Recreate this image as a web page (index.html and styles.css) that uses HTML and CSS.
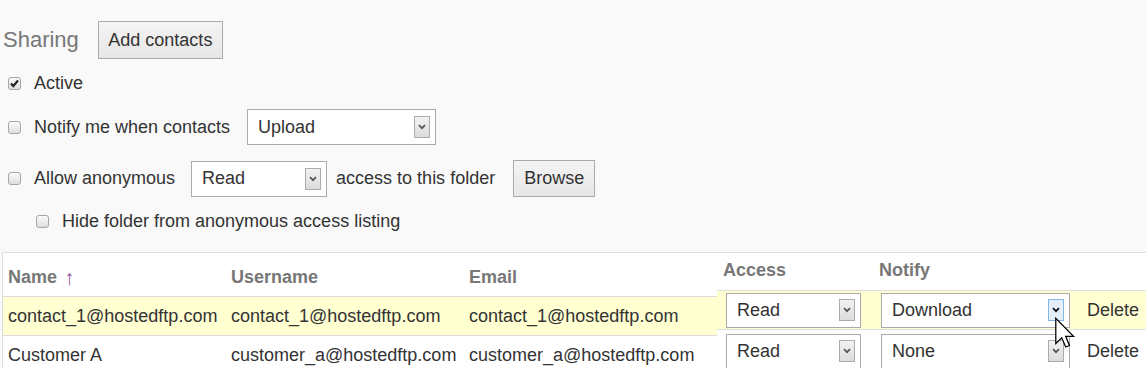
FILE: index.html
```html
<!DOCTYPE html>
<html>
<head>
<meta charset="utf-8">
<link rel="stylesheet" href="styles.css">
</head>
<body>
<div class="page">
  <div class="title-row">
    <span class="title">Sharing</span>
    <button class="btn btn-add">Add contacts</button>
  </div>

  <div class="opt opt-active">
    <span class="cb checked"><svg width="11" height="11" viewBox="0 0 11 11"><path d="M2 5.5 L4.3 8 L9 2.5" fill="none" stroke="#222" stroke-width="2.2"/></svg></span>
    <span class="lbl">Active</span>
  </div>

  <div class="opt opt-notify">
    <span class="cb"></span>
    <span class="lbl gap17">Notify me when contacts</span>
    <div class="select sel-upload"><span class="val">Upload</span><span class="arrow"><svg width="8" height="6" viewBox="0 0 8 6"><path d="M1 1.2 L4 4.2 L7 1.2" fill="none" stroke="#555" stroke-width="1.7"/></svg></span></div>
  </div>

  <div class="opt opt-anon">
    <span class="cb"></span>
    <span class="lbl gap16">Allow anonymous</span>
    <div class="select sel-read"><span class="val">Read</span><span class="arrow"><svg width="8" height="6" viewBox="0 0 8 6"><path d="M1 1.2 L4 4.2 L7 1.2" fill="none" stroke="#555" stroke-width="1.7"/></svg></span></div>
    <span class="lbl gap18">access to this folder</span>
    <button class="btn btn-browse">Browse</button>
  </div>

  <div class="opt opt-hide">
    <span class="cb"></span>
    <span class="lbl">Hide folder from anonymous access listing</span>
  </div>

  <div class="table">
    <div class="tr thead">
      <div class="td c-name">Name<span class="sort">↑</span></div>
      <div class="td c-user">Username</div>
      <div class="td c-email">Email</div>
      <div class="td c-access r">Access</div>
      <div class="td c-notify r">Notify</div>
      <div class="td c-del r"></div>
    </div>
    <div class="tr hl">
      <div class="td c-name">contact_1@hostedftp.com</div>
      <div class="td c-user">contact_1@hostedftp.com</div>
      <div class="td c-email">contact_1@hostedftp.com</div>
      <div class="td c-access r"><div class="select sel-acc"><span class="val">Read</span><span class="arrow"><svg width="8" height="6" viewBox="0 0 8 6"><path d="M1 1.2 L4 4.2 L7 1.2" fill="none" stroke="#555" stroke-width="1.7"/></svg></span></div></div>
      <div class="td c-notify r"><div class="select sel-not"><span class="val">Download</span><span class="arrow hover"><svg width="8" height="6" viewBox="0 0 8 6"><path d="M1 1.2 L4 4.2 L7 1.2" fill="none" stroke="#111" stroke-width="1.9"/></svg></span></div></div>
      <div class="td c-del r">Delete</div>
    </div>
    <div class="tr">
      <div class="td c-name">Customer A</div>
      <div class="td c-user">customer_a@hostedftp.com</div>
      <div class="td c-email">customer_a@hostedftp.com</div>
      <div class="td c-access r"><div class="select sel-acc"><span class="val">Read</span><span class="arrow"><svg width="8" height="6" viewBox="0 0 8 6"><path d="M1 1.2 L4 4.2 L7 1.2" fill="none" stroke="#555" stroke-width="1.7"/></svg></span></div></div>
      <div class="td c-notify r"><div class="select sel-not"><span class="val">None</span><span class="arrow"><svg width="8" height="6" viewBox="0 0 8 6"><path d="M1 1.2 L4 4.2 L7 1.2" fill="none" stroke="#555" stroke-width="1.7"/></svg></span></div></div>
      <div class="td c-del r">Delete</div>
    </div>
  </div>
</div>
<svg class="cursor" width="22" height="34" viewBox="0 0 14 21"><path d="M0.5 0.5 L0.5 16.5 L4.3 12.9 L6.8 18.8 L9.2 17.8 L6.8 12 L11.8 12 Z" fill="#fff" stroke="#000" stroke-width="0.8" stroke-linejoin="miter"/></svg>
</body>
</html>
```
FILE: styles.css
```css
html, body {
  margin: 0;
  padding: 0;
}
body {
  background: #f9f9f9;
  font-family: "Liberation Sans", Arial, sans-serif;
  font-size: 18px;
  color: #333;
  width: 1146px;
  height: 368px;
  overflow: hidden;
  position: relative;
}
.page {
  padding-top: 21px;
}
.title-row {
  display: flex;
  align-items: center;
  height: 38px;
  padding-left: 3px;
}
.title {
  font-size: 22px;
  color: #777;
  margin-right: 19px;
}
.btn {
  font-family: "Liberation Sans", Arial, sans-serif;
  font-size: 18px;
  color: #333;
  border: 1px solid #aaa;
  border-radius: 0;
  background: linear-gradient(#f4f4f4, #e6e6e6);
  padding: 0;
  margin: 0;
  white-space: nowrap;
  flex: none;
}
.btn-add {
  height: 38px;
  width: 125px;
}
.btn-browse {
  height: 37px;
  width: 82px;
}
.opt {
  display: flex;
  align-items: center;
  padding-left: 8px;
  white-space: nowrap;
}
.opt-active { height: 26px; margin-top: 11px; }
.opt-notify { height: 36px; margin-top: 13px; }
.opt-anon { height: 37px; margin-top: 15px; }
.opt-hide { height: 26px; margin-top: 11px; padding-left: 36px; }
.cb {
  width: 11px;
  height: 11px;
  border: 1px solid #a6a6a6;
  border-radius: 3px;
  background: linear-gradient(#fbfbfb, #dedede);
  margin-right: 13px;
  display: flex;
  align-items: center;
  justify-content: center;
  flex: none;
}
.cb svg { display: block; }
.gap17 { margin-right: 17px; }
.gap16 { margin-right: 16px; }
.gap18 { margin-right: 18px; }
.select {
  box-sizing: border-box;
  height: 36px;
  border: 1px solid #aaa;
  background: #fff;
  display: flex;
  align-items: center;
  justify-content: space-between;
  padding-left: 10px;
  padding-right: 5px;
  flex: none;
}
.select .val { color: #333; }
.arrow {
  box-sizing: border-box;
  width: 16px;
  height: 22px;
  border: 1px solid #acacac;
  background: linear-gradient(#f2f2f2, #dcdcdc);
  display: flex;
  align-items: center;
  justify-content: center;
}
.arrow svg { display: block; }
.arrow.hover {
  background: #e3effb;
  border-color: #86b6e6;
}
.sel-upload { width: 189px; }
.sel-read { width: 136px; height: 36px; margin-right: 9px; }
.table {
  margin-top: 18px;
  margin-left: 2px;
  border-left: 1px solid #ddd;
  border-top: 1px solid #ddd;
  background: #fff;
  height: 120px;
}
.tr {
  display: flex;
}
.td {
  box-sizing: border-box;
  border-bottom: 1px solid #ddd;
  padding-left: 6px;
  display: flex;
  align-items: center;
  height: 39px;
  white-space: nowrap;
}
.thead .td {
  height: 44px;
  align-items: flex-end;
  padding-bottom: 8px;
  font-weight: bold;
  color: #777;
}
.thead .td.r { background: transparent; padding-bottom: 9px; }
.sort {
  color: #96579a;
  font-weight: normal;
  font-size: 21px;
  line-height: 20px;
  margin-left: 7px;
}
.hl .td { background: #ffffd2; }
.td.r {
  margin-top: -6px;
  margin-bottom: 6px;
}
.tr:not(.thead):not(.hl) .td { padding-top: 1px; }
.tr:not(.thead):not(.hl) .td.r { margin-top: -4px; padding-top: 0; }
.c-name { width: 222px; padding-left: 5px; }
.c-user { width: 238px; }
.c-email { width: 254px; }
.c-access { width: 156px; }
.c-notify { width: 206px; }
.c-del { flex: 1; padding-left: 8px; }
.sel-acc { width: 135px; height: 35px; margin-left: 3px; }
.sel-not { width: 189px; height: 35px; margin-left: 2px; }
.cursor {
  position: absolute;
  left: 1055px;
  top: 317px;
}
```
